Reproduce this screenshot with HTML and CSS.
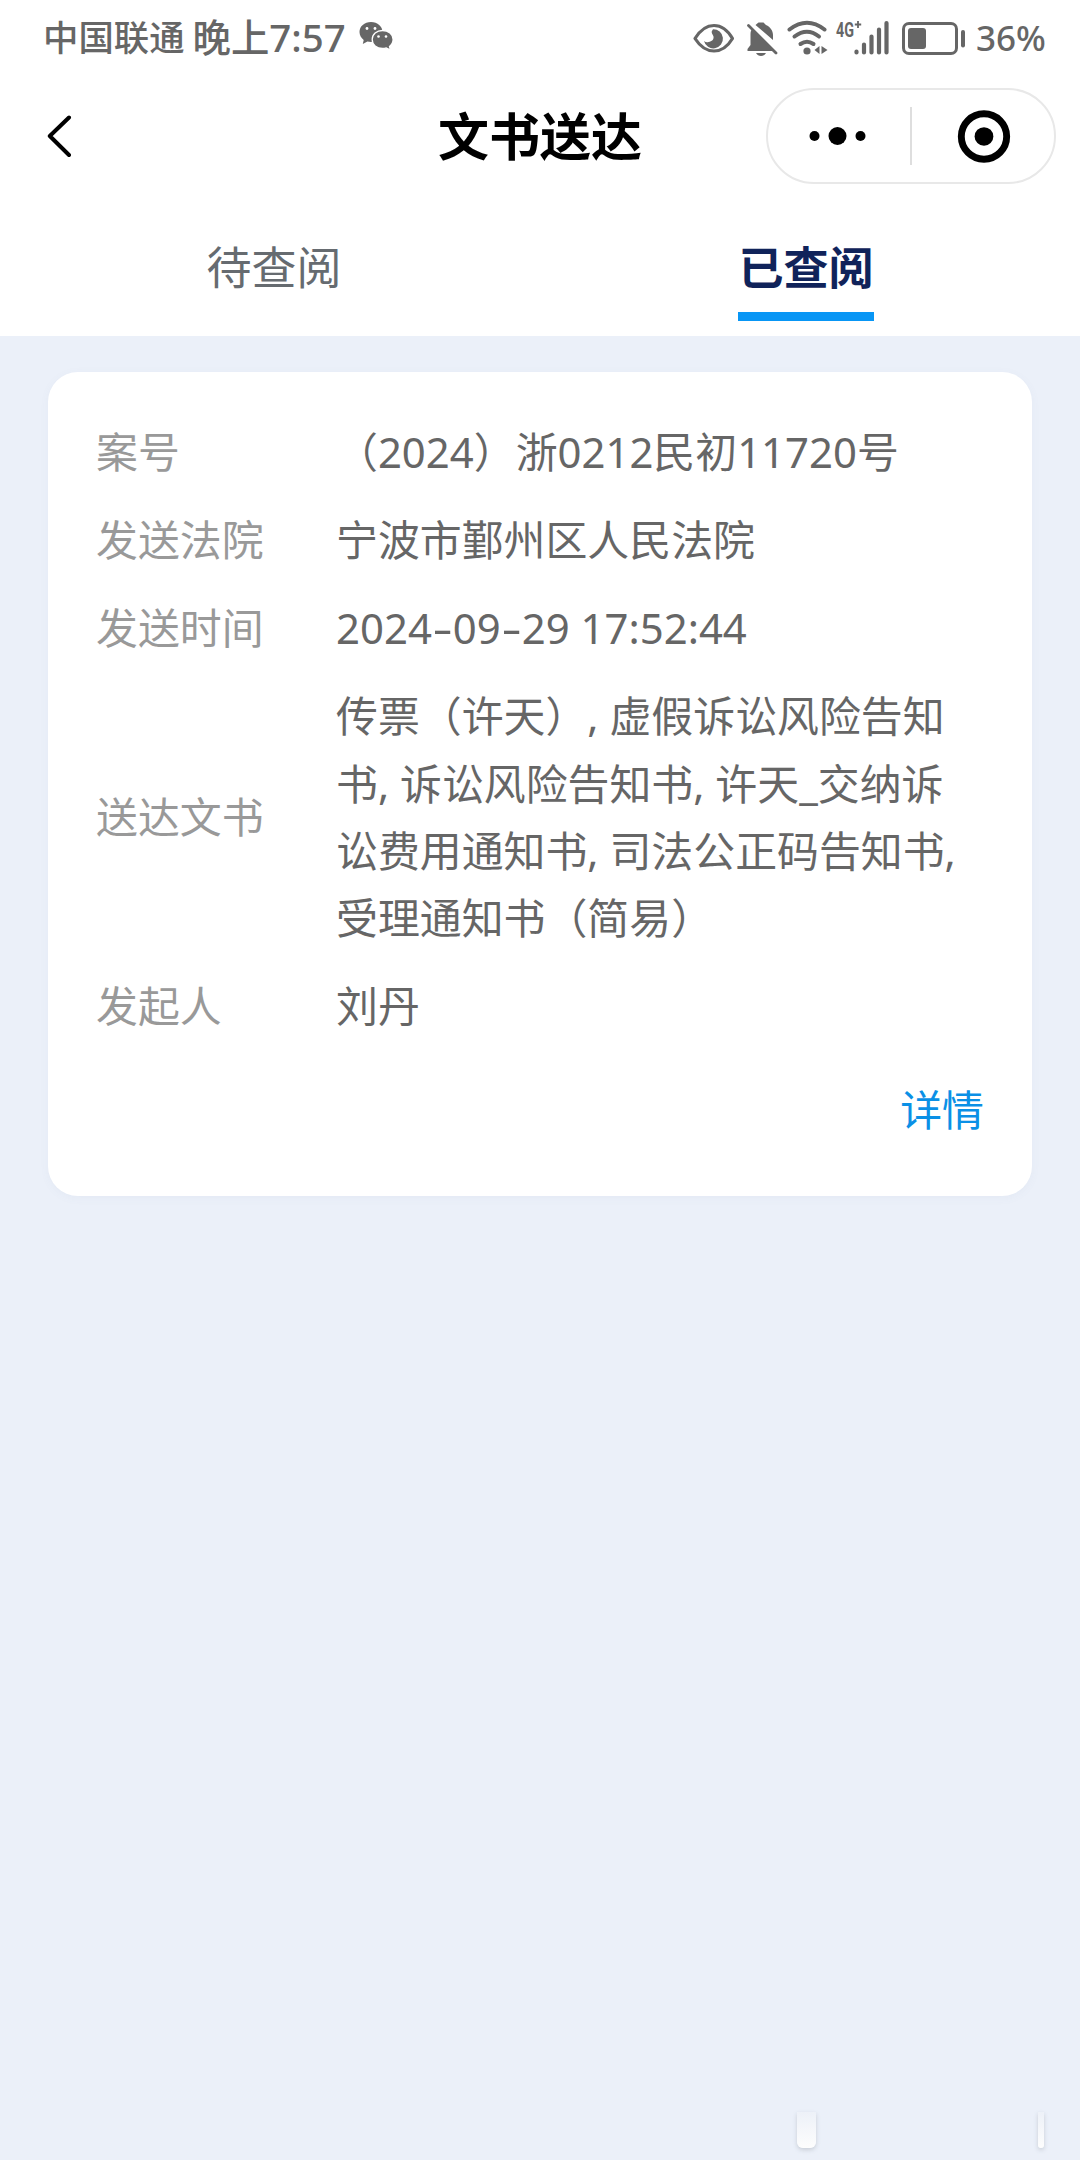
FILE: index.html
```html
<!DOCTYPE html>
<html lang="zh-CN">
<head>
  <meta charset="UTF-8">
  <title>文书送达</title>
  <link rel="stylesheet" href="styles.css">
</head>
<body>

<!-- 状态栏 -->
<div class="status-bar">
  <span class="carrier">中国联通</span>
  <span class="clock">晚上7:57</span>
  <svg class="wechat" width="34" height="30" viewBox="0 0 34 30">
    <path fill="#666" d="M12 1C5.400 1 .5 5.400 .5 11c0 3.300 1.700 6 4.200 7.900L3.800 23l4.600-2.500c1.200.3 2.400.5 3.600.5 6.600 0 11.500-4.500 11.500-10S18.600 1 12 1z"/>
    <path fill="#666" stroke="#fff" stroke-width="1.300" d="M23.500 9.500c-5.900 0-10.300 3.900-10.300 9s4.400 9 10.300 9c1.400 0 2.600-.2 3.800-.6l4.200 2.200-1-3.700c2.200-1.700 3.600-4.100 3.600-6.900 0-5.100-4.700-9-10.600-9z"/>
    <g fill="#fff"><circle cx="8" cy="7.500" r="1.400"/><circle cx="16" cy="7.500" r="1.400"/><circle cx="19.500" cy="15.500" r="1.300"/><circle cx="27" cy="15.500" r="1.300"/></g>
  </svg>

  <div class="status-icons">
    <svg width="42" height="36" viewBox="0 0 42 36">
      <path d="M2 18.500Q10 5.500 21 5.500T39.500 18.500Q32 31 21 31T2 18.500z" fill="none" stroke="#666" stroke-width="3.200" stroke-linejoin="round"/>
      <path d="M20 9.200a9.600 9.600 0 1 1-9 11.800c1.500 1.300 3 1.600 4.500 1 3.500-.5 5.500-2.500 5-5.500-.4-2-2.200-3-1.800-5z" fill="#666"/>
    </svg>
    <svg class="bell" width="34" height="36" viewBox="0 0 34 36">
      <path d="M2.500 31v-2l3-4V14c0-2 .5-3.500 1.500-5L28 30v1z" fill="#666"/>
      <path d="M10.500 5l3-2.500h5L21 5c4.500 2 7 6 7 10v5z" fill="#666"/>
      <path d="M11 33h10c-2 4-8 4-10 0z" fill="#666"/>
      <path d="M3.500 5.500L31 33" stroke="#666" stroke-width="2.800" stroke-linecap="round"/>
    </svg>
    <svg class="wifi" width="42" height="36" viewBox="0 0 42 36">
      <g fill="none" stroke="#666" stroke-width="4" stroke-linecap="round">
        <path d="M2.500 9.500Q20 -4 37.500 9.500"/>
        <path d="M7.500 16.500Q20 7 32 16.500"/>
        <path d="M13.500 24Q20 19.500 26.500 24"/>
      </g>
      <circle cx="20" cy="31" r="3.600" fill="#666"/>
      <path d="M32.500 26v8l-5-4zM34.500 26v8l6-4z" fill="#666"/>
    </svg>
    <svg class="signal" width="54" height="36" viewBox="0 0 54 36">
      <text x="0" y="16.500" textLength="18" lengthAdjust="spacingAndGlyphs" class="net">4G</text>
      <path d="M22 1v7M18.800 4.500h6.400" stroke="#666" stroke-width="1.800"/>
      <path d="M20.500 31.500v1M28 24.500v8M35.500 16.500v16M43 9.500v23M50.500 3v29.500" stroke="#666" stroke-width="4.200" stroke-linecap="round"/>
    </svg>
    <svg class="battery" width="64" height="36" viewBox="0 0 64 36">
      <rect x="1.500" y="3.500" width="53" height="30" rx="5.500" fill="none" stroke="#666" stroke-width="3"/>
      <rect x="6" y="8" width="18" height="21" rx="3" fill="#666"/>
      <rect x="59" y="10" width="4" height="17.500" rx="2" fill="#666"/>
    </svg>
    <span class="percent">36%</span>
  </div>
</div>

<!-- 导航栏 -->
<div class="nav">
  <svg class="back" width="26" height="46" viewBox="0 0 26 46">
    <path d="M22 4.500L2.800 23 22 42" fill="none" stroke="#000" stroke-width="4" stroke-linecap="round" stroke-linejoin="round"/>
  </svg>
  <h1 class="title">文书送达</h1>
  <div class="capsule">
    <svg width="142" height="58" viewBox="0 0 142 58">
      <circle cx="46.500" cy="29" r="5"/>
      <circle cx="69.500" cy="29" r="9"/>
      <circle cx="92.500" cy="29" r="5"/>
    </svg>
    <svg class="capsule-close" width="144" height="58" viewBox="0 0 144 58">
      <circle cx="73" cy="29.500" r="23" fill="none" stroke="#000" stroke-width="7"/>
      <circle cx="73" cy="29.500" r="9.500"/>
    </svg>
  </div>
</div>

<div class="tabs">
  <div class="tab"><span>待查阅</span></div>
  <div class="tab active"><span>已查阅</span></div>
</div>

<!-- 文书卡片 -->
<div class="card">
  <div class="row">
    <div class="label">案号</div>
    <div class="value">（2024）浙0212民初11720号</div>
  </div>
  <div class="row">
    <div class="label">发送法院</div>
    <div class="value">宁波市鄞州区人民法院</div>
  </div>
  <div class="row">
    <div class="label">发送时间</div>
    <div class="value">2024<span class="dash">-</span>09<span class="dash">-</span>29 17:52:44</div>
  </div>
  <div class="row">
    <div class="label">送达文书</div>
    <div class="value">传票（许天）, 虚假诉讼风险告知<br>书, 诉讼风险告知书, 许天_交纳诉<br>讼费用通知书, 司法公正码告知书,<br>受理通知书（简易）</div>
  </div>
  <div class="row">
    <div class="label">发起人</div>
    <div class="value">刘丹</div>
  </div>
  <a class="detail">详情</a>
</div>

<div class="marks">
  <i class="mark"></i>
  <i class="mark thin"></i>
</div>

</body>
</html>
```
FILE: styles.css
```css
* {
  box-sizing: border-box;
}

body {
  margin: 0;
  height: 2160px;
  display: flex;
  flex-direction: column;
  overflow: hidden;
  background: #ebf0f9;
  font-family: "Noto Sans", "Noto Sans CJK SC", sans-serif;
  color: #666;
}

svg {
  display: block;
  flex: none;
}

/* 状态栏 */
.status-bar {
  display: flex;
  align-items: center;
  height: 76px;
  padding: 0 35px 0 43px;
  background: #fff;
  white-space: nowrap;
  line-height: 56px;
}

.carrier {
  margin-top: -2px;
  font-size: 35.4px;
  font-weight: 500;
}

.clock {
  margin-left: 8px;
  margin-top: -2px;
  font-size: 38.4px;
  font-weight: 500;
}

.wechat {
  margin-left: 13px;
  margin-top: -4px;
}

.status-icons {
  display: flex;
  align-items: center;
  margin-left: auto;
  margin-top: -1px;
}

.bell {
  margin-left: 10px;
}

.wifi {
  margin-left: 8px;
}

.signal {
  margin-left: 7px;
  overflow: visible;
}

.net {
  font-family: Roboto, sans-serif;
  font-size: 20px;
  font-weight: 700;
  fill: #666;
}

.battery {
  margin-left: 12px;
}

.percent {
  width: 69px;
  margin-left: 10px;
  font-size: 35px;
  font-weight: 500;
}

/* 导航栏 */
.nav {
  display: grid;
  grid-template-columns: 1fr auto 1fr;
  align-items: center;
  height: 120px;
  padding: 0 24px 0 47px;
  background: #fff;
}

.title {
  margin: 0;
  padding-right: 23px;
  font-size: 51px;
  font-weight: 700;
  line-height: 72px;
  color: #000;
}

.capsule {
  display: flex;
  align-items: center;
  justify-self: end;
  width: 290px;
  height: 96px;
  border: 2px solid #e8e8e8;
  border-radius: 48px;
}

.capsule-close {
  border-left: 2px solid #dedede;
}

/* 标签 */
.tabs {
  display: flex;
  height: 140px;
  padding: 0 8px 15px;
  background: #fff;
}

.tab {
  flex: 1;
  display: flex;
  justify-content: center;
  align-items: flex-end;
  font-size: 45px;
  line-height: 64px;
  color: #666b70;
}

.tab span {
  padding-bottom: 12px;
  border-bottom: 9px solid transparent;
}

.tab.active {
  font-weight: 700;
  color: #10235a;
}

.tab.active span {
  border-color: #0896f5;
}

/* 卡片 */
.card {
  height: 824px;
  margin: 36px 48px 0;
  padding: 36px 48px 0;
  display: flex;
  flex-direction: column;
  background: #fff;
  border-radius: 30px;
  box-shadow: 0 2px 10px rgba(90, 110, 150, 0.05);
  font-size: 41.9px;
  line-height: 67.2px;
}

.row {
  display: flex;
  align-items: center;
  padding: 10.4px 0;
}

.label {
  width: 240px;
  color: #999;
}

.value {
  white-space: nowrap;
}

.dash {
  display: inline-block;
  width: 21px;
  text-align: center;
  transform: scaleX(1.5);
}

.detail {
  align-self: flex-end;
  margin-top: 26px;
  color: #0a90e6;
}

/* 底部光斑 */
.marks {
  display: flex;
  justify-content: space-between;
  margin: auto 36px 12px 797px;
}

.mark {
  width: 19px;
  height: 36px;
  border-radius: 0 0 6px 6px;
  background: linear-gradient(#edf1f8, #fdfdfd);
  box-shadow: 0 2px 4px rgba(120, 125, 135, 0.3);
}

.mark.thin {
  width: 6px;
  border-radius: 0 0 3px 3px;
}
```
